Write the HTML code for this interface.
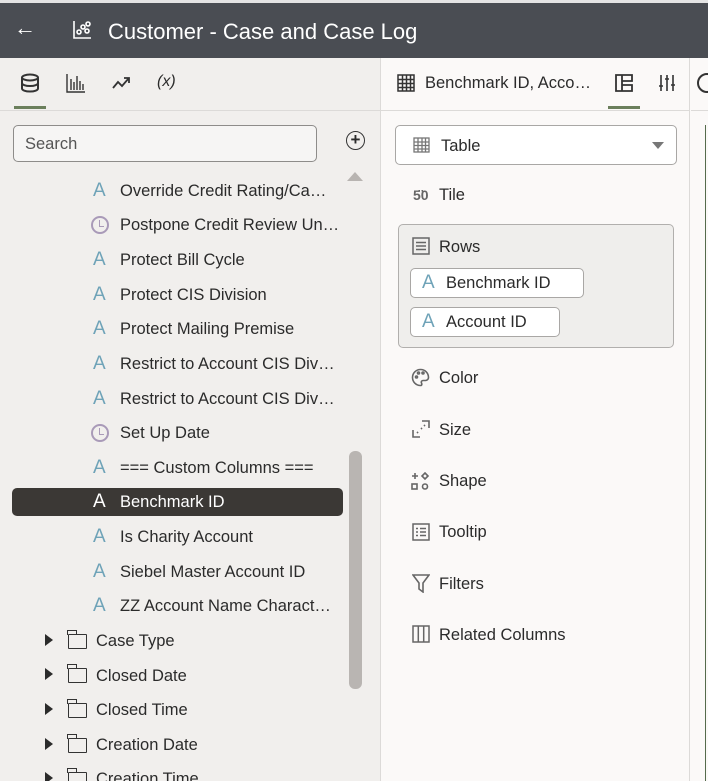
<!DOCTYPE html>
<html><head><meta charset="utf-8"><style>
*{box-sizing:border-box;margin:0;padding:0}
html,body{width:708px;height:781px;overflow:hidden}
body{font-family:"Liberation Sans",sans-serif;color:#2b2b2b;background:#fbf9f8;position:relative}
.abs{position:absolute}
#hdr{left:0;top:0;width:708px;height:58px;background:#4a4d53;border-top:3px solid #e4e4e4}
#hdr .t{left:108px;top:16px;font-size:22px;color:#fff}
#left{left:0;top:58px;width:381px;height:723px;background:#f1efed;border-right:1px solid #dcdad8}
#mid{left:381px;top:58px;width:309px;height:723px;background:#fbf9f8;border-right:1px solid #dcdad8}
.tabrow{height:53px;border-bottom:1px solid #dcdad8}
.ul{height:3px;background:#6b7f5c}
.row{position:absolute;font-size:16.5px;white-space:nowrap;color:#2b2b2b}
.A{position:absolute;color:#6fa3b8;font-size:19px}
.clk{position:absolute;width:18px;height:18px;border:2px solid #a99ab8;border-radius:50%}
.clk:after{content:"";position:absolute;left:6px;top:2px;width:4px;height:6px;border-left:1.6px solid #a99ab8;border-bottom:1.6px solid #a99ab8}
.tri{position:absolute;width:0;height:0;border-left:8px solid #2b2b2b;border-top:6px solid transparent;border-bottom:6px solid transparent}
.fold{position:absolute;width:19px;height:15px;border:1.6px solid #333;border-radius:1px}
.fold:before{content:"";position:absolute;left:-2px;top:-5px;width:8px;height:4px;border:1.6px solid #333;border-bottom:none}
.mi{position:absolute;left:439px;font-size:16.5px;color:#2b2b2b}
.chip{position:absolute;background:#fff;border:1px solid #a9a7a5;border-radius:5px;height:30px;font-size:16.5px;padding:5px 0 0 35px}
.chip .A{left:11px;top:3px}
</style></head><body>
<div id="hdr" class="abs">
<div class="abs" style="left:14px;top:12px;color:#fff;font-size:22px">←</div>
<svg class="abs" style="left:72px;top:17px" width="20" height="20" viewBox="0 0 20 20" fill="none" stroke="#fff" stroke-width="1.6"><path d="M2 1v17h17"/><circle cx="7" cy="12" r="2"/><circle cx="11" cy="7" r="2"/><circle cx="16" cy="4" r="2"/><circle cx="15" cy="11" r="2"/></svg>
<div class="abs t">Customer - Case and Case Log</div>
</div>
<div id="left" class="abs">
<div class="tabrow" style="position:relative">
<svg class="abs" style="left:20px;top:15px" width="20" height="20" viewBox="0 0 20 20" fill="none" stroke="#333" stroke-width="2"><ellipse cx="10" cy="4.5" rx="8" ry="3"/><path d="M2 4.5v11c0 1.7 3.6 3 8 3s8-1.3 8-3v-11M2 10c0 1.7 3.6 3 8 3s8-1.3 8-3"/></svg>
<div class="abs ul" style="left:14px;top:48px;width:32px"></div>
<svg class="abs" style="left:66px;top:15px" width="20" height="20" viewBox="0 0 20 20" fill="none" stroke="#333" stroke-width="1.4"><path d="M1 1v18h18M5 17V6M8 17V9M11 17V3M14 17V8M17 17V11"/></svg>
<svg class="abs" style="left:112px;top:18px" width="20" height="14" viewBox="0 0 20 14" fill="none" stroke="#333" stroke-width="1.8"><path d="M1 12l5-6 4 4 7-8M12 2h5v5"/></svg>
<div class="abs" style="left:157px;top:15px;font-style:italic;font-size:16px">(x)</div>
</div>
<div class="abs" style="left:13px;top:67px;width:304px;height:37px;border:1px solid #8e8c8a;border-radius:5px;background:#f6f5f4;font-size:16.5px;color:#555;padding:9px 11px">Search</div>
<div class="abs" style="left:346px;top:73px;width:19px;height:19px;border:1.8px solid #333;border-radius:50%;text-align:center;font-size:17px;line-height:15px;font-weight:bold">+</div>
<div class="abs" style="left:347px;top:114px;width:0;height:0;border-left:8px solid transparent;border-right:8px solid transparent;border-bottom:9px solid #b8b4b1"></div>
<div class="abs" style="left:349px;top:393px;width:13px;height:238px;background:#b9b5b2;border-radius:6px"></div>
<div class="abs" style="left:12px;top:430px;width:331px;height:28px;background:#3b3835;border-radius:5px"></div>
</div>
<div id="rows">
<span class="A" style="left:93px;top:180px">A</span><div class="row" style="left:120px;top:182px">Override Credit Rating/Ca…</div>
<span class="clk" style="left:91px;top:216px"></span><div class="row" style="left:120px;top:216px">Postpone Credit Review Un…</div>
<span class="A" style="left:93px;top:249px">A</span><div class="row" style="left:120px;top:251px">Protect Bill Cycle</div>
<span class="A" style="left:93px;top:284px">A</span><div class="row" style="left:120px;top:286px">Protect CIS Division</div>
<span class="A" style="left:93px;top:318px">A</span><div class="row" style="left:120px;top:320px">Protect Mailing Premise</div>
<span class="A" style="left:93px;top:353px">A</span><div class="row" style="left:120px;top:355px">Restrict to Account CIS Div…</div>
<span class="A" style="left:93px;top:388px">A</span><div class="row" style="left:120px;top:390px">Restrict to Account CIS Div…</div>
<span class="clk" style="left:91px;top:424px"></span><div class="row" style="left:120px;top:424px">Set Up Date</div>
<span class="A" style="left:93px;top:457px">A</span><div class="row" style="left:120px;top:459px">=== Custom Columns ===</div>
<span class="A" style="left:93px;top:491px;color:#fff">A</span><div class="row" style="left:120px;top:493px;color:#fff">Benchmark ID</div>
<span class="A" style="left:93px;top:526px">A</span><div class="row" style="left:120px;top:528px">Is Charity Account</div>
<span class="A" style="left:93px;top:561px">A</span><div class="row" style="left:120px;top:563px">Siebel Master Account ID</div>
<span class="A" style="left:93px;top:595px">A</span><div class="row" style="left:120px;top:597px">ZZ Account Name Charact…</div>
<span class="tri" style="left:45px;top:634px"></span><span class="fold" style="left:68px;top:634px"></span><div class="row" style="left:96px;top:632px">Case Type</div>
<span class="tri" style="left:45px;top:668px"></span><span class="fold" style="left:68px;top:668px"></span><div class="row" style="left:96px;top:667px">Closed Date</div>
<span class="tri" style="left:45px;top:703px"></span><span class="fold" style="left:68px;top:703px"></span><div class="row" style="left:96px;top:701px">Closed Time</div>
<span class="tri" style="left:45px;top:738px"></span><span class="fold" style="left:68px;top:738px"></span><div class="row" style="left:96px;top:736px">Creation Date</div>
<span class="tri" style="left:45px;top:772px"></span><span class="fold" style="left:68px;top:772px"></span><div class="row" style="left:96px;top:770px">Creation Time</div>
</div>
<div id="mid" class="abs">
<div class="tabrow" style="position:relative">
<svg class="abs" style="left:16px;top:16px" width="18" height="18" viewBox="0 0 18 18" fill="none" stroke="#333" stroke-width="1.5"><rect x="1" y="1" width="16" height="16"/><path d="M1 5.5h16M1 9.5h16M1 13.5h16M5.5 1v16M9.5 1v16M13.5 1v16"/></svg>
<div class="abs" style="left:44px;top:16px;font-size:16.5px">Benchmark ID, Acco…</div>
<svg class="abs" style="left:234px;top:16px" width="18" height="18" viewBox="0 0 18 18" fill="none" stroke="#333" stroke-width="1.8"><path d="M1 1h6v16H1zM7 1h10v6H7zM7 11h10v6H7z"/></svg>
<div class="abs ul" style="left:227px;top:48px;width:32px"></div>
<svg class="abs" style="left:277px;top:16px" width="18" height="18" viewBox="0 0 18 18" fill="none" stroke="#333" stroke-width="1.6"><path d="M3 1v16M9 1v16M15 1v16M1 12h4M7 5h4M13 11h4"/></svg>
</div>
<div class="abs" style="left:14px;top:67px;width:282px;height:40px;border:1px solid #a9a7a5;border-radius:5px;background:#fff">
<svg class="abs" style="left:17px;top:11px" width="17" height="16" viewBox="0 0 17 16" fill="none" stroke="#777" stroke-width="1.3"><rect x="1" y="1" width="15" height="14"/><path d="M1 5h15M1 8.5h15M1 12h15M5 1v14M9 1v14M12.5 1v14"/></svg>
<div class="abs" style="left:45px;top:11px;font-size:16.5px">Table</div>
<div class="abs" style="left:256px;top:16px;width:0;height:0;border-left:6px solid transparent;border-right:6px solid transparent;border-top:7px solid #777"></div>
</div>
<div class="abs" style="left:17px;top:166px;width:276px;height:124px;background:#efeeec;border:1px solid #b1afad;border-radius:5px"></div>
</div>
<div class="abs" style="left:413px;top:187px;font-size:14px;font-weight:bold;color:#666">5̈0</div>
<div class="mi" style="top:186px">Tile</div>
<svg class="abs" style="left:412px;top:237px" width="18" height="18" viewBox="0 0 18 18" fill="none" stroke="#666" stroke-width="1.5"><rect x="1" y="1" width="16" height="16"/><path d="M4 5.5h10M4 9h10M4 12.5h10"/></svg>
<div class="mi" style="top:238px">Rows</div>
<div class="chip" style="left:410px;top:268px;width:174px"><span class="A">A</span>Benchmark ID</div>
<div class="chip" style="left:410px;top:307px;width:150px"><span class="A">A</span>Account ID</div>
<svg class="abs" style="left:411px;top:368px" width="19" height="19" viewBox="0 0 19 19" fill="none" stroke="#666" stroke-width="1.6"><path d="M9.5 1.5a8 8 0 1 0 0 16c1.5 0 1.5-1.5 1-2.5s0-2.5 1.5-2.5h2.5a3 3 0 0 0 3-3c0-4.5-3.5-8-8-8z"/><circle cx="5.5" cy="9" r="1"/><circle cx="7.5" cy="5" r="1"/><circle cx="12" cy="5" r="1"/></svg>
<div class="mi" style="top:369px">Color</div>
<svg class="abs" style="left:412px;top:420px" width="18" height="18" viewBox="0 0 18 18" fill="none" stroke="#666" stroke-width="1.6"><path d="M1 10v7h7M10 1h7v7" /><path d="M5 13l2-2M9 9l1-1M12 6l1-1" stroke-dasharray="1.5 2"/></svg>
<div class="mi" style="top:421px">Size</div>
<svg class="abs" style="left:411px;top:472px" width="19" height="19" viewBox="0 0 19 19" fill="none" stroke="#666" stroke-width="1.6"><path d="M4 1v6M1 4h6M14 1l3 3-3 3-3-3z"/><rect x="1" y="12" width="5" height="5"/><circle cx="14" cy="14.5" r="2.5"/></svg>
<div class="mi" style="top:472px">Shape</div>
<svg class="abs" style="left:412px;top:523px" width="18" height="18" viewBox="0 0 18 18" fill="none" stroke="#666" stroke-width="1.5"><rect x="1" y="1" width="16" height="16"/><path d="M4 5.5h2M8 5.5h6M4 9h2M8 9h6M4 12.5h2M8 12.5h6"/></svg>
<div class="mi" style="top:523px">Tooltip</div>
<svg class="abs" style="left:412px;top:574px" width="18" height="19" viewBox="0 0 18 19" fill="none" stroke="#666" stroke-width="1.6"><path d="M1 1h16l-6 8v9l-4-3V9z"/></svg>
<div class="mi" style="top:575px">Filters</div>
<svg class="abs" style="left:412px;top:625px" width="18" height="18" viewBox="0 0 18 18" fill="none" stroke="#666" stroke-width="1.5"><rect x="1" y="1" width="16" height="16"/><path d="M6.3 1v16M11.7 1v16"/></svg>
<div class="mi" style="top:626px">Related Columns</div>
<div class="abs" style="left:691px;top:58px;width:17px;height:53px;border-bottom:1px solid #dcdad8"></div>
<div class="abs" style="left:697px;top:73px;width:20px;height:20px;border:2px solid #333;border-radius:50%"></div>
<div class="abs" style="left:705px;top:125px;width:3px;height:656px;border-left:1px solid #556b4c"></div>
</body></html>
